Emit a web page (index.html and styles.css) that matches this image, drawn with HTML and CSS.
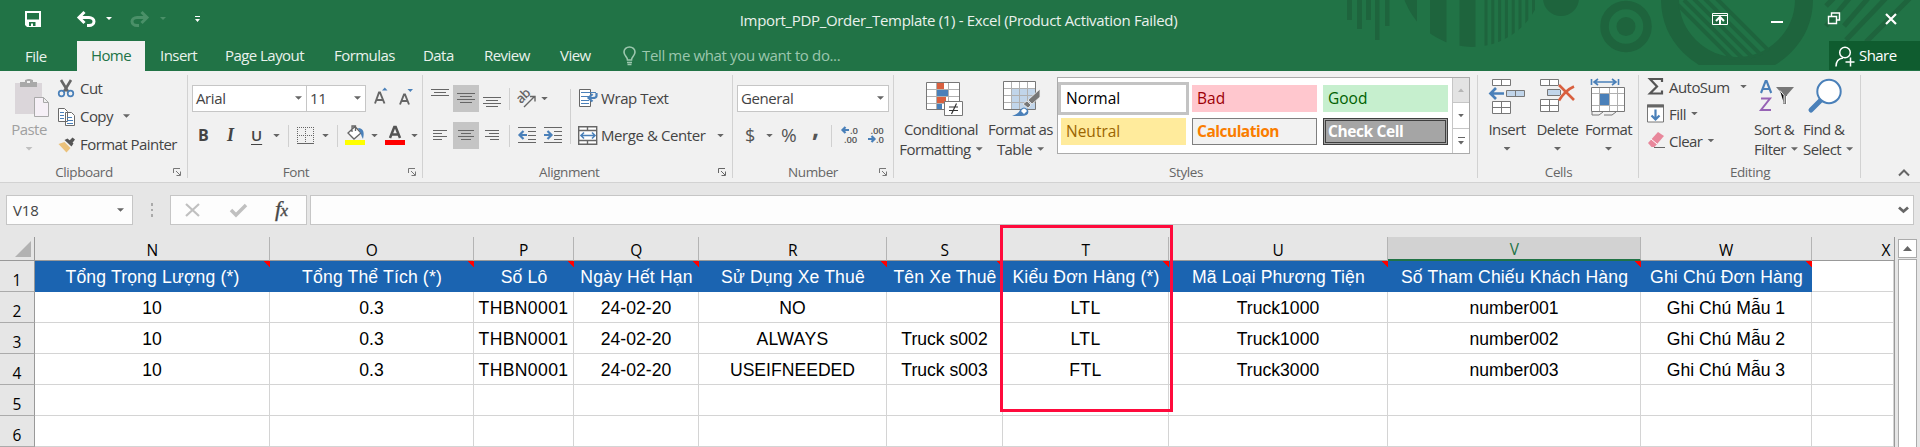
FILE: index.html
```html
<!DOCTYPE html>
<html lang="vi">
<head>
<meta charset="utf-8">
<title>Import_PDP_Order_Template (1) - Excel</title>
<link rel="stylesheet" href="styles.css">
</head>
<body>
<header class="top">
  <svg class="deco" width="580" height="71" viewBox="1340 0 580 71">
    <defs>
      <clipPath id="disc"><circle cx="1472" cy="-25" r="72"/></clipPath>
      <clipPath id="flat"><rect x="1640" y="0" width="200" height="65"/></clipPath>
      <clipPath id="hole"><circle cx="1737" cy="1" r="59"/></clipPath>
    </defs>
    <path d="M1347 0h5v20h-5zM1357 0h5v29h-5zM1366 0h5v20h-5zM1375 0h4.500v40h-4.500zM1385 0h4.500v26h-4.500z"/>
    <g clip-path="url(#disc)"><path d="M1400 0h17v60h-17zM1430 0h16.500v60h-16.500zM1459.500 0h16v60h-16zM1484.500 0h3v60h-3zM1491.300 0h3v60h-3zM1498.100 0h3v60h-3zM1504.900 0h3v60h-3zM1511.700 0h3v60h-3zM1518.500 0h3v60h-3zM1525.300 0h3v60h-3zM1532 0h3v60h-3z"/></g>
    <circle cx="1561" cy="-2" r="18"/>
    <circle class="ring" cx="1626" cy="26.500" r="21.500" stroke-width="8.500"/>
    <circle cx="1626" cy="26.500" r="9.500"/>
    <g clip-path="url(#flat)"><circle class="ring" cx="1737" cy="-1" r="67" stroke-width="18"/></g>
    <g clip-path="url(#hole)"><path class="ring" stroke-width="4" d="M1678 5l64 64M1684 0l66 66M1693 -2l66 66M1704 -2l66 66M1716 -2l66 66"/></g>
    <path class="ring" stroke-width="5" d="M1834 -2l-8 8M1853 -6l-27 32M1870 -4l-26 30M1888 -4l-42 44M1912 -4l-46 46"/>
  </svg>
  <div class="titlebar">
    <svg class="qat" width="210" height="41" viewBox="0 0 210 41">
      <path fill="#fff" fill-rule="evenodd" d="M25 11h16v16H27l-2-2zM27 13v6.500h12V13zM29 22v4h2v-2.500h2V26h2.500v-4z"/>
      <path fill="none" stroke="#fff" stroke-width="3" d="M79 17.500h10a5 4 0 0 1 0 8H87M84.500 12l-5.500 5.500l5.500 5.500"/>
      <path fill="#fff" d="M106 17h6l-3 3zM195 16h5v1h-5zM195 19h5l-2.500 3z"/>
      <path fill="none" stroke="#4a9068" stroke-width="3" d="M147 17.500h-10a5 4 0 0 0 0 8H139M141.500 12l5.500 5.500l-5.500 5.500"/>
      <path fill="#4a9068" d="M160 17h6l-3 3z"/>
    </svg>
    <div class="doc-title">Import_PDP_Order_Template (1) - Excel (Product Activation Failed)</div>
    <svg class="winctl" width="220" height="41" viewBox="1700 0 220 41" fill="none" stroke="#fff">
      <path stroke-width="1" d="M1712.500 13.500h15v11h-15zM1712 15.500h16"/><path stroke-width="2" d="M1720 24v-6M1716 21l4-4l4 4"/>
      <path stroke-width="2" d="M1771 22h12"/>
      <path stroke-width="1.400" d="M1831.500 16v-3h8v7h-3M1828.500 16.500h8v7h-8z"/>
      <path stroke-width="2.200" d="M1886 14l10 10M1896 14l-10 10"/>
    </svg>
  </div>
  <nav class="tabs">
    <span class="tab file">File</span><span class="tab active">Home</span><span class="tab t3">Insert</span><span class="tab t4">Page Layout</span><span class="tab t5">Formulas</span><span class="tab t6">Data</span><span class="tab t7">Review</span><span class="tab t8">View</span>
    <svg class="bulb" width="14" height="20" viewBox="0 0 14 20" fill="none" stroke="#9cc7ae" stroke-width="1.600"><path d="M4.500 14c0-3-3.500-4-3.500-8a5.500 5 0 0 1 11 0c0 4-3.500 5-3.500 8zM4 16.500h5M4.500 18.500h4"/></svg>
    <span class="tell">Tell me what you want to do...</span>
    <span class="share"><svg width="20" height="21" viewBox="0 0 20 21" fill="none" stroke="#fff" stroke-width="1.500"><circle cx="10" cy="6.500" r="5.300"/><path d="M1 20.500c0-5 3-8 7-8.500M15.500 11.500v9M10.500 16h9"/></svg>Share</span>
  </nav>
</header>

<section class="ribbon">
  <div class="group clipboard">
    <div class="body">
      <div class="big paste">
        <svg width="36" height="40" viewBox="14 78 36 40"><path fill="#dbd6da" d="M15 83h27v31H15z"/><path fill="#a9a9a9" d="M20 82h5v-2l3-1h2l3 1v2h4v5H20zM27 81v2h3v-2z" fill-rule="evenodd"/><path fill="#f6f0f7" stroke="#a9a9a9" d="M34.500 97.500h9l5 5v14h-14zM43.500 97.500v5h5"/></svg>
        <span>Paste</span><i class="caret"></i>
      </div>
      <div class="stack clip-list">
        <div class="item"><svg width="18" height="20" viewBox="57 79 18 20"><path stroke="#666" stroke-width="2.600" fill="none" d="M61 80l7 11.500M71 80l-7 11.500"/><g fill="none" stroke="#4a80b9" stroke-width="1.700"><circle cx="61.500" cy="93.500" r="2.800"/><circle cx="70.500" cy="93.500" r="2.800"/></g></svg><span>Cut</span></div>
        <div class="item"><svg width="18" height="20" viewBox="57 106 18 20"><g fill="#fff" stroke="#6a6a6a"><path d="M58.500 107.500h6l3 3v10h-9zM65.500 111.500h6l3 3v10h-9z"/></g><path stroke="#4a80b9" d="M60 111.500h4M60 114.500h4M60 117.500h4M67 116.500h5M67 119.500h6M67 122.500h6" /></svg><span>Copy</span><i class="caret c1"></i></div>
        <div class="item"><svg width="18" height="20" viewBox="57 134 18 20"><path fill="#ebc27c" d="M58.500 143l6-2l6 6l-4 4.500z"/><path fill="#555" d="M64.500 139l3-1.500l6 5l-2 3zM69 140l3.500-3.500l2.500 2l-3 4z"/></svg><span class="fp">Format Painter</span></div>
      </div>
    </div>
    <div class="foot"><span>Clipboard</span><svg class="launch" width="9" height="9" viewBox="0 0 9 9"><path d="M.500 5V.500H7M3 3l4 4M7.500 3.500v4h-4"/></svg></div>
  </div>

  <div class="group font">
    <div class="rows">
      <div class="row">
        <span class="combo face">Arial<i class="caret"></i></span><span class="combo size">11<i class="caret"></i></span>
        <svg class="grow" width="42" height="20" viewBox="373 89 42 20"><path fill="#4a80b9" d="M382 91.500h5.500l-2.700-3zM407.500 90h5.500l-2.700 3z"/><g fill="none" stroke="#666" stroke-width="1.900"><path d="M375 104.500l4-11h1l4.500 11M377 101h6M400 105.500l4-10h1l4 10M402 102h5.500"/></g></svg>
      </div>
      <div class="row">
        <b class="fmt fb">B</b><b class="fmt fi">I</b><b class="fmt fu">U</b><i class="caret m11"></i><i class="sep m8"></i>
        <svg class="m8" width="18" height="18" viewBox="0 0 18 18" fill="none" stroke="#666"><path stroke-dasharray="1 1" d="M.500 0v17M8.500 0v17M16.500 0v17M0 .500h17M0 8.500h17"/><path d="M0 16.500h17"/></svg>
        <i class="caret m7"></i><i class="sep m8"></i>
        <svg class="m7" width="21" height="21" viewBox="343 125 21 21"><path fill="#ff0" d="M343 140h20v5h-20z"/><path fill="#fff" stroke="#666" stroke-width="1.300" d="M346 133l7-6.500l6 6.500l-7 6zM350 132v-6h3.500v5"/><path fill="#4a80b9" d="M356 128c6 0 6.500 5 5 11c-2-3-2-6-3-7z"/></svg>
        <i class="caret m5"></i>
        <svg class="m7" width="21" height="21" viewBox="382 125 21 21"><path fill="red" d="M382 140h20v5h-20z"/><path fill="none" stroke="#555" stroke-width="2.500" d="M387 138l4.300-11h1.400l4.300 11M389 134.500h6.500"/></svg>
        <i class="caret m5"></i>
      </div>
    </div>
    <div class="foot"><span>Font</span><svg class="launch" width="9" height="9" viewBox="0 0 9 9"><path d="M.500 5V.500H7M3 3l4 4M7.500 3.500v4h-4"/></svg></div>
  </div>

  <div class="group align">
    <div class="body mid">
      <div class="rows">
        <div class="row">
          <svg class="a1" width="18" height="27" viewBox="0 0 18 27"><path d="M0 4.500h18M3 7.500h12M0 10.500h18"/></svg>
          <span class="on"><svg width="18" height="27" viewBox="0 0 18 27"><path d="M0 8.500h18M3 11.500h12M0 14.500h18M3 17.500h12"/></svg></span>
          <svg class="a3" width="18" height="27" viewBox="0 0 18 27"><path d="M0 12.500h18M3 15.500h12M0 18.500h18M3 21.500h12"/></svg>
          <i class="sep m8"></i>
          <svg class="ab" width="21" height="20" viewBox="517 88 21 20"><g transform="translate(523 104) rotate(-45)"><text x="-1" y="-2" class="abt">ab</text></g><path class="g15" d="M524 106l10-10M530 95.500h5v5"/></svg>
          <i class="caret m3"></i>
        </div>
        <div class="row">
          <svg class="a1" width="18" height="27" viewBox="0 0 18 27"><path d="M2 8.500h14M2 11.500h9M2 14.500h14M2 17.500h9"/></svg>
          <span class="on"><svg width="18" height="27" viewBox="0 0 18 27"><path d="M1 8.500h16M4 11.500h10M1 14.500h16M4 17.500h10" /></svg></span>
          <svg class="a3" width="18" height="27" viewBox="0 0 18 27"><path d="M2 8.500h14M6 11.500h10M2 14.500h14M7 17.500h9" /></svg>
          <i class="sep m8"></i>
          <svg class="m8" width="45" height="17" viewBox="518 127 45 17"><path d="M518 127.500h18M528 131.500h8M528 135.500h8M528 139.500h8M518 142.500h18M544 127.500h18M554 131.500h8M554 135.500h8M554 139.500h8M544 142.500h18"/><path class="blue2" d="M527 135h-7M523.500 131l-4 4l4 4M544 135h7M547.500 131l4 4l-4 4"/></svg>
        </div>
      </div>
      <i class="sep tall"></i>
      <div class="rows wrapcol">
        <div class="row"><svg width="20" height="19" viewBox="578 89 20 19"><path fill="#fff" class="g1" d="M579.500 89.500h11v17h-11z"/><path class="blue1" d="M581 92.500h15M581 96.500h8M581 100.500h8M581 103.500h8"/><path class="blue2" d="M596.500 93v3q0 2-4 2h-3M592.500 94l-4 4l4 3.500"/></svg><span class="wt">Wrap Text</span></div>
        <div class="row"><svg width="20" height="19" viewBox="578 125.500 20 19"><path fill="#fff" class="g15" d="M578.700 126.200h18v17.500h-18zM578.700 130h18M578.700 140h18M587.500 126v4M587.500 140v4"/><path class="blue15" d="M581 135h14M584 132l-3 3l3 3M592 132l3 3l-3 3"/></svg><span class="mc">Merge &amp; Center</span><i class="caret"></i></div>
      </div>
    </div>
    <div class="foot"><span>Alignment</span><svg class="launch" width="9" height="9" viewBox="0 0 9 9"><path d="M.500 5V.500H7M3 3l4 4M7.500 3.500v4h-4"/></svg></div>
  </div>

  <div class="group number">
    <div class="rows">
      <div class="row"><span class="combo gen">General<i class="caret"></i></span></div>
      <div class="row"><span class="sym dol">$</span><i class="caret"></i><span class="sym pct">%</span><span class="sym com">,</span><i class="sep"></i>
        <svg class="dec" width="17" height="19" viewBox="0 0 17 19"><path class="blue2" d="M7 4H1M3.500 1l-3 3l3 3"/><text x="8" y="7.500">.0</text><text x="2" y="17">.00</text></svg>
        <svg class="dec d2" width="17" height="19" viewBox="0 0 17 19"><path class="blue2" d="M0 13h6M3.500 10l3 3l-3 3"/><text x="2.500" y="7.500">.00</text><text x="8" y="17">.0</text></svg>
      </div>
    </div>
    <div class="foot"><span>Number</span><svg class="launch" width="9" height="9" viewBox="0 0 9 9"><path d="M.500 5V.500H7M3 3l4 4M7.500 3.500v4h-4"/></svg></div>
  </div>

  <div class="group styles">
    <div class="body">
      <div class="big cf">
        <svg width="38" height="40" viewBox="924 79 38 40"><path fill="#fff" d="M925.500 83.500h33v27h-33z"/><path fill="#d9603f" d="M936 84h7v6h-7zM936 98h9v6h-9z"/><path fill="#4a80b9" d="M936 91h11v6h-11zM936 105h5v6h-5z"/><path class="lt" d="M926 90.500h33M926 97.500h33M926 104.500h33M935.500 84v27M947.500 84v27"/><path class="g1" fill="none" d="M925.500 83.500h33v27h-33z"/><path fill="#fff" class="g1" d="M943.500 102.500h18v14h-18z"/><path stroke="#333" stroke-width="1.200" d="M948 108h9M948 111.500h9M955.500 104.500l-5 10.500"/></svg>
        <span>Conditional</span><span>Formatting<i class="caret"></i></span>
      </div>
      <div class="big fat">
        <svg width="38" height="40" viewBox="1003 79 38 40"><path fill="#fff" d="M1004.500 82.500h32v28h-32z"/><path fill="#c1d5ea" d="M1012 90h24v20h-24z"/><path class="lt" d="M1004 89.500h32M1004 96.500h32M1004 103.500h32M1012.500 83v27M1020.500 83v27M1028.500 83v27"/><path class="g1" fill="none" d="M1004.500 82.500h32v28h-32z"/><path fill="#777" stroke="#f1f1f1" stroke-width=".8" d="M1041 90v8l-8 7l-4-4zM1028 102l4 4l-3 3l-5-4z"/><path fill="#4a80b9" d="M1013 117q7-2 8-6q4-5 8 0q2 6-7 6z"/><path fill="#fff" d="M1022 112q3-5 6 0l-3 3z"/></svg>
        <span>Format as</span><span>Table<i class="caret"></i></span>
      </div>
      <div class="gallery">
        <div class="swatches">
          <span class="sw normal">Normal</span><span class="sw bad">Bad</span><span class="sw good">Good</span>
          <span class="sw neutral">Neutral</span><span class="sw calc">Calculation</span><span class="sw check">Check Cell</span>
        </div>
        <div class="gscroll"><span class="off"><i class="caret up"></i></span><span><i class="caret"></i></span><span><i class="more"></i><i class="caret"></i></span></div>
      </div>
    </div>
    <div class="foot"><span>Styles</span></div>
  </div>

  <div class="group cells">
    <div class="body">
      <div class="big ins">
        <svg width="37" height="40" viewBox="1488 79 37 40"><g class="g1" fill="#fff"><path d="M1491.500 80.500h18v6h-18zM1500.500 80.500v6M1491.500 102.500h18v12h-18zM1500.500 102.500v12M1491.500 108.500h18"/><path fill="#c1d5ea" d="M1505.500 91.500h18v6h-18zM1514.500 91.500v6"/></g><path class="blue25" d="M1503 94.500h-13M1495 89l-5.500 5.500l5.500 5.500"/></svg>
        <span>Insert</span><i class="caret"></i>
      </div>
      <div class="big del">
        <svg width="37" height="40" viewBox="1540 79 37 40"><g class="g1" fill="#fff"><path d="M1541.500 80.500h18v6h-18zM1550.500 80.500v6M1541.500 100.500h18v12h-18zM1550.500 100.500v12M1541.500 106.500h18"/><path fill="#c1d5ea" d="M1548.500 90.500h13v6h-13z"/></g><path fill="none" stroke="#f1f1f1" stroke-width="5" d="M1560 86l16 15M1576 87l-16 14"/><path fill="none" stroke="#d9603f" stroke-width="2.600" d="M1560 86l15 15M1575 87.500q-9 4-15 14"/></svg>
        <span>Delete</span><i class="caret"></i>
      </div>
      <div class="big fmtc">
        <svg width="37" height="40" viewBox="1590 78 37 40"><path fill="#fff" d="M1591.500 87.500h33v24h-33z"/><path fill="#4a80b9" d="M1600 94h9v11h-9z"/><path class="lt" d="M1592 93.500h33M1592 105.500h33M1599.500 88v24M1609.500 88v24M1617.500 88v24"/><path class="g1" fill="none" d="M1591.500 87.500h33v24h-33zM1592 112v3h7l4-3M1604 115h8l4-3"/><path class="blue15" d="M1591.500 79v6M1618.500 79v6M1594 82h22M1598 79l-4 3l4 3M1612 79l4 3l-4 3"/></svg>
        <span>Format</span><i class="caret"></i>
      </div>
    </div>
    <div class="foot"><span>Cells</span></div>
  </div>

  <div class="group editing">
    <div class="body">
      <div class="stack edit-list">
        <div class="item"><svg width="18" height="20" viewBox="1647 78 18 20"><path fill="none" stroke="#555" stroke-width="2.200" d="M1662 83v-3h-12l7 7.500l-7 7h12v-3"/></svg><span class="as">AutoSum</span><i class="caret c3"></i></div>
        <div class="item"><svg width="18" height="20" viewBox="1647 104.500 18 20"><path fill="#fff" class="g1" d="M1647.500 105.500h16v17h-16z"/><path fill="#666" d="M1647 105h17v3h-17z"/><path class="blue2" d="M1655.500 110v10M1651.500 116l4 4l4-4"/></svg><span>Fill</span><i class="caret c2"></i></div>
        <div class="item"><svg width="18" height="20" viewBox="1647 132 18 20"><path fill="#e8879b" d="M1648 144l10-11l6 4l-9.500 11h-3z"/><path stroke="#fff" d="M1651 140l6 5"/><path stroke="#666" d="M1654 148.500h11"/></svg><span>Clear</span><i class="caret c2"></i></div>
      </div>
      <div class="big sort">
        <svg width="36" height="40" viewBox="1758 79 36 40"><path fill="none" stroke="#4a80b9" stroke-width="2.100" d="M1760 94l4.600-12h1l4.600 12M1761.500 90h8"/><path fill="none" stroke="#9763b5" stroke-width="2" d="M1760 99.500h9l-9 11.500h10"/><path fill="#777" d="M1775 88h18l-7 8v9h-4v-9z"/><path stroke="#fff" d="M1783 104.500v-8l-4-5M1785.500 105v-8"/></svg>
        <span>Sort &amp;</span><span>Filter<i class="caret"></i></span>
      </div>
      <div class="big find">
        <svg width="36" height="40" viewBox="1811 79 36 40"><path stroke="#4a80b9" stroke-width="5" stroke-linecap="round" d="M1824 101l-10 10"/><circle cx="1832" cy="92.500" r="11.700" fill="#fff" stroke="#4a80b9" stroke-width="2"/></svg>
        <span>Find &amp;</span><span>Select<i class="caret"></i></span>
      </div>
    </div>
    <div class="foot"><span>Editing</span></div>
  </div>
  <svg class="collapse" width="12" height="8" viewBox="0 0 12 8"><path fill="none" stroke="#666" stroke-width="2" d="M1 6.500l5-5l5 5"/></svg>
</section>

<section class="fbar">
  <div class="namebox">V18<i class="caret"></i></div>
  <div class="dots"><i></i><i></i><i></i></div>
  <div class="fbtns">
    <svg width="137" height="28" viewBox="171 196 137 28"><path fill="none" stroke="#c0c0c0" stroke-width="2.200" d="M186 204l13 12M199 204l-13 12"/><path fill="none" stroke="#c0c0c0" stroke-width="3.500" d="M231 210l5 5l10-10"/></svg>
    <span class="fx">f<small>x</small></span>
  </div>
  <div class="finput"><svg width="11" height="8" viewBox="0 0 11 8"><path fill="none" stroke="#666" stroke-width="2.800" d="M1 1.500l4.500 4l4.500-4"/></svg></div>
</section>

<section class="sheet">
  <div class="grid">
    <div class="hd corner"><i></i></div><div class="hd">N</div><div class="hd">O</div><div class="hd">P</div><div class="hd">Q</div><div class="hd">R</div><div class="hd">S</div><div class="hd">T</div><div class="hd">U</div><div class="hd sel">V</div><div class="hd">W</div><div class="hd last">X</div>

    <div class="rn">1</div><div class="th note">Tổng Trọng Lượng (*)</div><div class="th note">Tổng Thể Tích (*)</div><div class="th note">Số Lô</div><div class="th note">Ngày Hết Hạn</div><div class="th note">Sử Dụng Xe Thuê</div><div class="th note">Tên Xe Thuê</div><div class="th note">Kiểu Đơn Hàng (*)</div><div class="th note">Mã Loại Phương Tiện</div><div class="th note">Số Tham Chiếu Khách Hàng</div><div class="th note">Ghi Chú Đơn Hàng</div><div class="td"></div>

    <div class="rn">2</div><div class="td">10</div><div class="td">0.3</div><div class="td caps">THBN0001</div><div class="td">24-02-20</div><div class="td">NO</div><div class="td"></div><div class="td caps">LTL</div><div class="td">Truck1000</div><div class="td">number001</div><div class="td">Ghi Chú Mẫu 1</div><div class="td"></div>

    <div class="rn">3</div><div class="td">10</div><div class="td">0.3</div><div class="td caps">THBN0001</div><div class="td">24-02-20</div><div class="td caps">ALWAYS</div><div class="td">Truck s002</div><div class="td caps">LTL</div><div class="td">Truck1000</div><div class="td">number002</div><div class="td">Ghi Chú Mẫu 2</div><div class="td"></div>

    <div class="rn">4</div><div class="td">10</div><div class="td">0.3</div><div class="td caps">THBN0001</div><div class="td">24-02-20</div><div class="td">USEIFNEEDED</div><div class="td">Truck s003</div><div class="td caps">FTL</div><div class="td">Truck3000</div><div class="td">number003</div><div class="td">Ghi Chú Mẫu 3</div><div class="td"></div>

    <div class="rn">5</div><div class="td"></div><div class="td"></div><div class="td"></div><div class="td"></div><div class="td"></div><div class="td"></div><div class="td"></div><div class="td"></div><div class="td"></div><div class="td"></div><div class="td"></div>
    <div class="rn">6</div><div class="td"></div><div class="td"></div><div class="td"></div><div class="td"></div><div class="td"></div><div class="td"></div><div class="td"></div><div class="td"></div><div class="td"></div><div class="td"></div><div class="td"></div>
  </div>
  <div class="vscroll"><div class="vbtn"><i class="caret up"></i></div><div class="thumb"></div></div>
  <div class="marker"></div>
</section>
</body>
</html>
```
FILE: styles.css
```css
* { box-sizing: border-box; }
body { margin: 0; width: 1920px; height: 447px; overflow: hidden; background: #e6e6e6; color: #444; font: 15px "Open Sans", "Noto Sans", sans-serif; letter-spacing: -0.55px; white-space: nowrap; }
svg { display: block; flex: none; overflow: visible; }
i { display: block; flex: none; font-style: normal; }
.caret { width: 7px; height: 3.5px; background: #666; clip-path: polygon(0 0, 100% 0, 50% 100%); }
.caret.up { clip-path: polygon(50% 0, 100% 100%, 0 100%); }
.sep { width: 1px; height: 22px; background: #d0d0d0; }

/* title bar and tabs */
.top { position: relative; height: 71px; background: #217346; color: #fff; }
.deco { position: absolute; right: 0; top: 0; overflow: hidden; fill: #1e643d; }
.deco .ring { fill: none; stroke: #1e643d; }
.titlebar { position: relative; display: flex; height: 41px; justify-content: space-between; }
.doc-title { flex: 1; padding-left: 7px; text-align: center; line-height: 41px; letter-spacing: -0.33px; color: #e9f1ec; }
.tabs { position: relative; display: flex; height: 30px; line-height: 29px; color: #e9f2ec; }
.file { width: 77px; padding-left: 25px; padding-top: 1px; }
.active { width: 68px; background: #f1f1f1; color: #217346; text-align: center; }
.t3 { margin-left: 15px; width: 65px; }
.t4 { width: 109px; }
.t5 { width: 89px; }
.t6 { width: 61px; }
.t7 { width: 76px; }
.t8 { width: 63px; }
.bulb { margin-top: 5px; width: 14px; }
.tell { margin-left: 5px; color: #9cc7ae; letter-spacing: -0.36px; }
.share { display: flex; margin-left: auto; width: 91px; height: 29px; padding-left: 6px; background: #0f5c2f; color: #fff; }
.share svg { margin: 5px 4px 0 0; }

/* ribbon */
.ribbon { display: flex; height: 112px; background: #f1f1f1; border-bottom: 1px solid #d2d2d2; }
.group { position: relative; display: flex; flex-direction: column; height: 111px; }
.group::after { content: ""; position: absolute; right: 0; top: 4px; width: 1px; height: 103px; background: #d2d2d2; }
.body { display: flex; height: 92px; }
.foot { display: flex; height: 19px; align-items: center; justify-content: center; font-size: 13.5px; letter-spacing: -0.4px; color: #666; }
.foot span { line-height: 19px; margin-top: -1px; }
.launch { fill: none; stroke: #777; position: absolute; right: 6px; bottom: 5px; }
.clipboard { width: 188px; }
.font { width: 235px; }
.align { width: 310px; }
.number { width: 161px; }
.styles { width: 584px; }
.cells { width: 161px; }
.editing { width: 222px; }
.clipboard .foot { padding-right: 20px; }
.font .foot { padding-right: 19px; }
.align .foot { justify-content: flex-start; padding-left: 116px; }
.number .foot { padding-right: 1px; }

.big { display: flex; flex-direction: column; align-items: center; padding-top: 7px; line-height: 20px; }
.big svg { margin-bottom: 1px; }
.big > span { display: flex; align-items: center; }
.big span .caret { margin-left: 5px; }
.big > .caret { margin-top: 8px; }
.paste { width: 58px; color: #a0a0a0; }
.paste svg { margin-left: 5px; }
.paste .caret { background: #c0c0c0; }
.stack { display: flex; flex-direction: column; }
.item { display: flex; align-items: center; }
.item svg { margin-top: -1px; }
.item span { margin-top: -2px; }
.item .caret { margin-top: -2px; }
.clip-list { padding-top: 4px; margin-left: -1px; }
.clip-list .item { height: 28px; }
.clip-list span { margin-left: 5px; }
.item .c1 { margin-left: 10px; }

.rows { display: flex; flex-direction: column; gap: 10px; padding-top: 14px; height: 92px; }
.row { display: flex; align-items: center; height: 27px; }
.combo { display: flex; align-items: center; justify-content: space-between; height: 27px; padding: 0 4px 1px 3px; background: #fff; border: 1px solid #c6c6c6; letter-spacing: -0.4px; }
.face { width: 115px; margin-left: 4px; }
.size { width: 60px; margin-left: -1px; }
.grow { margin-left: 7px; margin-top: -1px; }
.fmt { font-size: 16px; letter-spacing: 0; line-height: 27px; color: #444; }
.fb { margin-left: 10px; width: 29px; }
.fi { width: 24px; font-family: "Liberation Serif", serif; font-style: italic; font-size: 18px; }
.fu { width: 11px; font-weight: 600; text-decoration: underline; font-size: 15px; text-underline-offset: 3px; }
.m3 { margin-left: 3px; }
.m5 { margin-left: 5px; }
.m7 { margin-left: 7px; }
.m8 { margin-left: 8px; }
.m11 { margin-left: 11px; }

.align svg path { fill: none; stroke: #666; }
.align svg path[fill] { fill: #fff; }
.a1 { margin-left: 8px; }
.on { display: flex; flex: none; justify-content: center; width: 26px; height: 27px; margin-left: 4px; background: #c5c5c5; }
.a3 { margin-left: 4px; }
.ab { margin-left: 7px; }
.abt { font: 600 13px "Open Sans", sans-serif; fill: #666; }
.tall { height: 55px; margin: 18px 0 0 6px; }
.mid .rows:first-child { width: 141px; }
.wrapcol { margin-left: 7px; }
.wrapcol span { margin: -2px 0 0 3px; letter-spacing: -0.42px; }
.mc { width: 107px; }
.wrapcol .caret { margin-left: 9px; }
.blue1, .align svg .blue1 { fill: none; stroke: #4a80b9; }
.blue15, .align svg .blue15 { fill: none; stroke: #4a80b9; stroke-width: 1.6; }
.blue2, .align svg .blue2 { fill: none; stroke: #4a80b9; stroke-width: 2.2; }
.blue25 { fill: none; stroke: #4a80b9; stroke-width: 2.7; }
.g1 { stroke: #777; }
.g15 { stroke: #666; stroke-width: 1.4; }
.lt { fill: none; stroke: #b0b0b0; }

.gen { width: 152px; margin-left: 4px; }
.sym { font-size: 18px; line-height: 27px; letter-spacing: 0; color: #555; }
.dol { margin-left: 12px; width: 21px; }
.pct { margin-left: 8px; width: 31px; font-size: 19px; }
.com { width: 19px; font-size: 25px; font-weight: 700; line-height: 27px; margin-top: -17px; }
.dec { margin-left: 10px; font-size: 9.5px; font-weight: 600; letter-spacing: -0.2px; fill: #555; }
.d2 { margin-left: 9px; }

.cf { width: 94px; }
.cf svg { margin-left: 5px; }
.fat { width: 65px; }
.gallery { display: flex; margin: 6px 0 0 4px; width: 413px; height: 77px; border: 1px solid #ababab; background: #fff; }
.swatches { display: grid; grid-template-columns: 125px 125px 125px; grid-auto-rows: 27px; gap: 6px; padding: 7px 0 0 3px; width: 394px; }
.sw { padding-left: 5px; line-height: 27px; font-size: 15.5px; letter-spacing: 0; }
.normal { color: #000; box-shadow: 0 0 0 3px #c3c3c3; }
.bad { background: #ffc7ce; color: #9c0006; }
.good { background: #c6efce; color: #006100; }
.neutral { background: #ffeb9c; color: #9c6500; }
.calc { background: #f2f2f2; color: #fa7d00; font-weight: 700; border: 1px solid #7f7f7f; line-height: 25px; padding-left: 4px; letter-spacing: -0.5px; }
.check { background: #a5a5a5; color: #fff; font-weight: 700; border: 3px double #3f3f3f; line-height: 21px; padding-left: 2px; letter-spacing: -0.4px; }
.gscroll { display: flex; flex-direction: column; width: 17px; border-left: 1px solid #c6c6c6; }
.gscroll span { display: flex; flex-direction: column; align-items: center; justify-content: center; gap: 3px; flex: 1; border-bottom: 1px solid #c6c6c6; }
.gscroll .off { background: #e3e3e3; }
.gscroll .off .caret { background: #b5b5b5; }
.gscroll .caret { width: 6px; }
.gscroll span:last-child { border-bottom: 0; }
.more { width: 7px; height: 1px; background: #666; }

.ins { width: 58px; }
.del { width: 43px; }
.fmtc { width: 59px; }
.edit-list { padding-top: 3px; margin-left: 8px; width: 102px; }
.edit-list .item { height: 27px; }
.edit-list span { margin-left: 4px; }
.as { width: 62px; }
.item .c2 { margin-left: 5px; }
.item .c3 { margin-left: 9px; }
.sort { width: 51px; margin-left: 2px; }
.find { width: 48px; }
.sort span, .find span { align-self: flex-start; margin-left: 3px; }
.find span { margin-left: 1px; }
.collapse { margin: 98px 0 0 37px; }

/* formula bar */
.fbar { display: flex; height: 54px; padding: 12px 6px 12px; }
.fbar > div { height: 30px; border: 1px solid #c6c6c6; background: #fdfdfd; }
.fbar .namebox { display: flex; width: 127px; align-items: center; justify-content: space-between; padding: 0 8px 0 6px; letter-spacing: -0.1px; }
.fbar .dots { display: flex; flex-direction: column; gap: 3px; width: 37px; align-items: center; padding-top: 8px; border: 0; background: none; }
.dots i { width: 2px; height: 2.5px; background: #aaa; }
.fbtns { display: flex; width: 137px; }
.fx { margin-left: -33px; font: italic 400 22px/26px "Liberation Serif", serif; color: #444; -webkit-text-stroke: 0.4px #555; }
.fx small { font-size: 17px; }
.finput { display: flex; flex: 1; margin-left: 3px; align-items: center; justify-content: flex-end; padding-right: 4px; }

/* worksheet */
.sheet { position: relative; display: flex; height: 210px; letter-spacing: 0; color: #000; }
.grid { display: grid; grid-template-columns: 35px 235px 204px 100px 125px 188px 116px 166px 219px 253px 171px 82px; grid-template-rows: 24px repeat(6, 31px); border-right: 1px solid #999; width: 1895px; background: #fff; }
.hd { display: flex; align-items: center; justify-content: center; padding-top: 2px; border-right: 1px solid #b4b4b4; border-bottom: 1px solid #999; background: #e6e6e6; font-size: 15.5px; letter-spacing: -0.5px; }
.hd.last { justify-content: flex-end; padding-right: 4px; border-right: 0; }
.hd.sel { background: #d2d2d2; color: #217346; border-bottom: 2px solid #217346; }
.corner { justify-content: flex-end; padding: 3px 3px 2px 0; border-color: #999; }
.corner i { width: 16px; height: 16px; background: #b2b2b2; clip-path: polygon(100% 0, 100% 100%, 0 100%); }
.rn { display: flex; align-items: center; justify-content: center; padding-top: 8px; border-right: 1px solid #999; border-bottom: 1px solid #ababab; background: #e6e6e6; font-size: 15.5px; }
.td, .th { display: flex; align-items: center; justify-content: center; padding-top: 2px; font-family: "Liberation Sans", Arial, sans-serif; font-size: 17.6px; }
.td { border-right: 1px solid #d4d4d4; border-bottom: 1px solid #d4d4d4; }
.td.caps { letter-spacing: 0.35px; }
.th { background: linear-gradient(225deg, #f00 4.7px, transparent 4.7px) #1b64b1; color: #fff; letter-spacing: 0.15px; }
.vscroll { margin: 2px 0 0 3px; width: 19px; height: 208px; }
.vbtn { display: flex; align-items: center; justify-content: center; height: 19px; background: #fff; border: 1px solid #ababab; }
.vbtn .caret { width: 9px; height: 5px; }
.thumb { margin-top: 1px; height: 190px; background: #fff; border: 1px solid #ababab; }
.marker { position: absolute; left: 1000px; top: -12px; width: 173px; height: 187px; border: 3px solid #ff0a3c; }
```
